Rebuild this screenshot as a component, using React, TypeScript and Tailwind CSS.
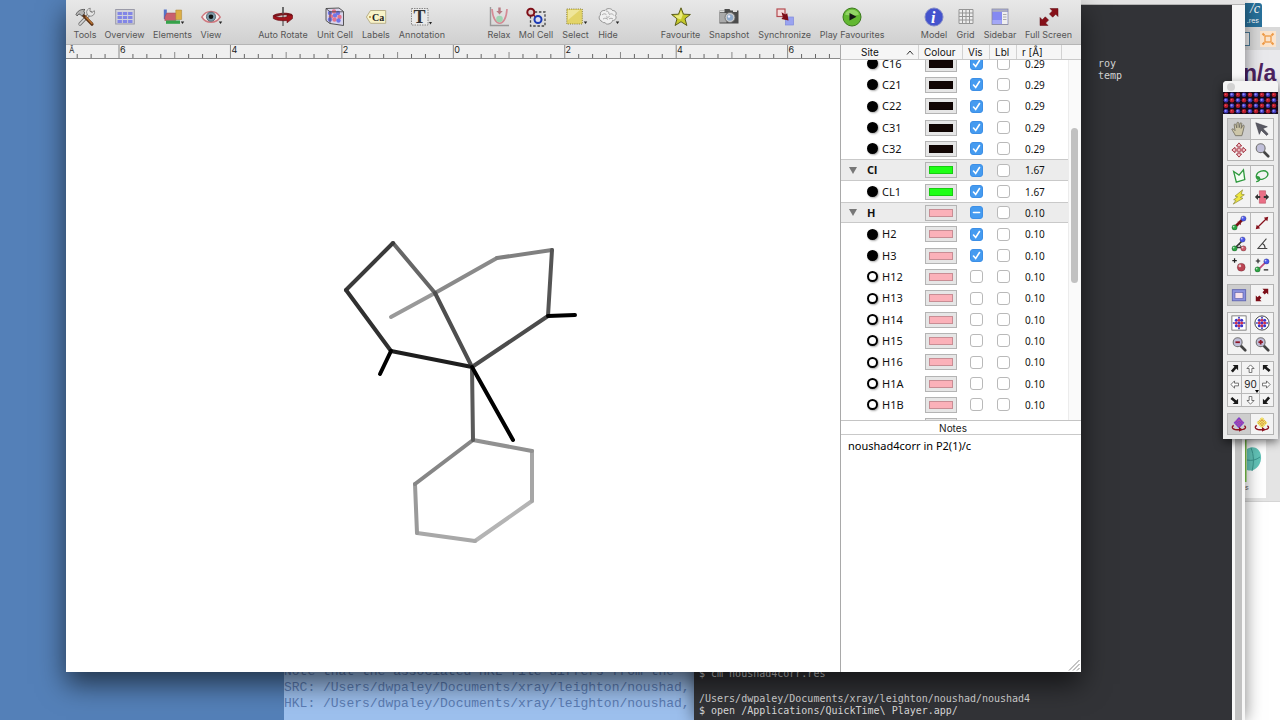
import { useLayoutEffect, useRef, useState } from "react";
import type { ReactNode } from "react";

const UI_FONT = "font-['Inter','Liberation_Sans',sans-serif]";
const LUCIDA_FONT = "font-['Noto_Sans','DejaVu_Sans',sans-serif]";
const MONO_FONT = "font-['DejaVu_Sans_Mono','Liberation_Mono',monospace]";

/* ---------- toolbar icons ---------- */

const DROP_ARROW = <path d="M17.8 14.5h3.4l-1.700 2.600z" fill="#222" />;

const ICONS: Record<string, ReactNode> = {
  tools: (
    <>
      <path d="M16 5.5 5 17" stroke="#777" strokeWidth="3.4" strokeLinecap="round" />
      <path d="M16 5.5 5 17" stroke="#d8d8d8" strokeWidth="1.8" strokeLinecap="round" />
      <path d="M19.3 3.6a4 4 0 1 1-4-2.4l-.4 3 2.2 1.3z" fill="#e4e4e4" stroke="#777" strokeWidth=".8" />
      <path d="m8 8 9 9.2" stroke="#5b3217" strokeWidth="3.2" strokeLinecap="round" />
      <path d="m11 10 6 6.4" stroke="#b87333" strokeWidth="1.5" strokeLinecap="round" />
      <path d="M1 7.5C2.5 4 5.500 2 10 2.500 8.500 3.500 8.500 4.500 9.800 6L6.800 9.200 5 7.200C3.600 7 2.500 7.500 2.300 9z" fill="#b5b5b5" stroke="#444" strokeWidth=".8" />
    </>
  ),
  overview: (
    <>
      <rect x=".7" y="2.500" width="18.600" height="14.500" fill="#d2d2da" stroke="#9a9aa8" />
      {[5, 9, 13].map((y) =>
        [2.5, 7.8, 13.1].map((x) => <rect key={`${x}-${y}`} x={x} y={y} width="4.400" height="3" fill="#8286e6" />),
      )}
    </>
  ),
  elements: (
    <>
      <path d="M.8 2.500h3v9.500h-3z" fill="#5572c8" />
      <path d="M3.800 6h9v7.500H1.800V10z" fill="#c9606e" stroke="#9d4553" strokeWidth=".5" />
      <path d="M12.800 3h5.800v9.500h-5.800z" fill="#dcae45" stroke="#a98331" strokeWidth=".5" />
      <path d="M3 13.500h14v3.300H3z" fill="#35a24a" />
      {DROP_ARROW}
    </>
  ),
  view: (
    <>
      <path d="M.8 10C5 2.500 15 2.500 19.200 10 15 17 5 17 .8 10z" fill="#f6eeee" stroke="#cf7a80" strokeWidth="1.500" />
      <circle cx="10" cy="9.700" r="4.600" fill="#7d99a8" stroke="#4a5c66" strokeWidth=".8" />
      <circle cx="10" cy="9.700" r="2.300" fill="#111" />
      {DROP_ARROW}
    </>
  ),
  autoRotate: (
    <>
      <path d="M10 0v19" stroke="#555" strokeWidth="1.200" />
      <path d="M.3 8.500C3 5.400 14 5 19 7l.5 2.500C14 7.500 5 8 1 11z" fill="#7a1a20" />
      <path d="M.3 8.500v3C4 13.800 9 14 14 13.500v2.300l5.500-4.200V8.200L14 7.800v2C9 10.800 4 10.500.3 8.500z" fill="#a3121b" stroke="#5e0a10" strokeWidth=".6" />
      <path d="M10 0v7" stroke="#555" strokeWidth="1.200" />
    </>
  ),
  unitCell: (
    <>
      <path d="M1 1.500 14 1l4.500 3.500v14L5 16.500 1 13.500z" fill="#d9d5ec" stroke="#444" strokeWidth=".9" />
      {[
        [5, 6, "#7276e6"], [9, 4.5, "#e5738c"], [13, 6, "#7276e6"], [6, 9.5, "#e5738c"], [10, 8.5, "#7276e6"],
        [14.5, 10, "#e5738c"], [5, 12.5, "#7276e6"], [9.5, 12.5, "#e5738c"], [13.5, 13.5, "#7276e6"],
      ].map(([x, y, c]) => <circle key={`${x}-${y}`} cx={x} cy={y} r="2.200" fill={c as string} />)}
      <path d="m1 1.500 4 3.300h13.500M5 4.800v11.700" fill="none" stroke="#444" strokeWidth=".8" />
    </>
  ),
  labels: (
    <>
      <path d="M4.500 3.500h15.200v12.800H4.500L.4 10z" fill="#f8f3c8" stroke="#b9b08a" />
      <circle cx="4" cy="10" r="1" fill="#b58b3a" />
      <text x="6" y="13.500" fontSize="10" fontWeight="700" fill="#222" className="font-['Liberation_Serif',serif]">Ca</text>
    </>
  ),
  annotation: (
    <>
      <rect x="-.5" y="1.500" width="16.500" height="16.500" fill="#e9e9e9" stroke="#888" strokeDasharray="1.500 1" />
      <text x="1.500" y="16" fontSize="18" fontWeight="700" fill="#333" className="font-['Liberation_Serif',serif]">T</text>
      <path d="M17 15h3l-1.500 2.500z" fill="#222" />
    </>
  ),
  relax: (
    <g opacity=".65">
      <path d="M1.500 0v18.500H20" fill="none" stroke="#777" strokeWidth="1.400" />
      <path d="M3 2c1.500 19 14 19 15 0" fill="none" stroke="#cf5d6c" strokeWidth="1.700" />
      <circle cx="10.500" cy="12" r="3.300" fill="#7ed09c" />
      <path d="M9.300.5h2.400V4h2l-3.200 3.500L7.300 4h2z" fill="#a24652" />
    </g>
  ),
  molCell: (
    <>
      <rect x="4.500" y="5" width="14.500" height="14" fill="none" stroke="#444" strokeWidth="1.300" strokeDasharray="2.500 1.700" />
      <circle cx="4.800" cy="5.300" r="3.500" fill="#dcc" stroke="#7f0e17" strokeWidth="2" />
      <path d="m7.500 8 1.700 1.700" stroke="#7f0e17" strokeWidth="1.500" />
      <circle cx="12" cy="12.500" r="3.500" fill="#dde" stroke="#1b3bb5" strokeWidth="2" />
    </>
  ),
  select: (
    <>
      <rect x=".8" y="2" width="15.500" height="15" fill="#e3d468" stroke="#8a8038" strokeDasharray="1 1.200" />
      <path d="M2 3h12L2 13z" fill="#efe69a" />
      {DROP_ARROW}
    </>
  ),
  hide: (
    <>
      <path d="M4 14.500C.5 13 .5 9 2.500 8 1.500 4.500 5 3 7 3.500 9 .5 14 1.500 14.500 3.500c3.500 0 4.500 3 3 5 1.500 3-.5 5-3 5C14 17 8 18.500 7 15.500c-1 .5-2.500 0-3-1z" fill="#f0f0f0" stroke="#888" strokeWidth=".9" />
      <path d="M4 8c2-2 4-1 4.500 0M8 4c2 0 3 1 3 3M11 8c2-2 4-1 5 .5M5 12c2-1.500 4-.5 5 .5M11 12c1-1 3-1 4 0M8 9.500c1 1 2 1 3.500 0" fill="none" stroke="#999" strokeWidth=".8" />
      {DROP_ARROW}
    </>
  ),
  favourite: (
    <>
      <path d="m10 .8 2.500 6.400 6.900.3-5.400 4.300 1.900 6.700L10 14.700l-5.900 3.800L6 11.800.6 7.500l6.900-.3z" fill="#c6c92a" stroke="#5c5e1d" strokeWidth="1" />
      <path d="m10 3.500 1.700 4.600-1.700 4.300-4-1.200-2.800-2.600 5-.4z" fill="#eaea7c" />
    </>
  ),
  snapshot: (
    <>
      <path d="M.5 3.500h5V2h5l1 1.500h8v13H.5z" fill="#4b4b4b" />
      <path d="M.5 3.500h5v1.800h-5zM14 3h4v2h-4z" fill="#ddd" />
      <path d="M.5 6h7v9.500h-7z" fill="#aaa" />
      <circle cx="11" cy="10.500" r="5" fill="#ccc" stroke="#666" strokeWidth=".8" />
      <circle cx="11" cy="10.500" r="3.200" fill="#8ea9c9" />
      <circle cx="10" cy="9.500" r="1.200" fill="#eef" />
    </>
  ),
  synchronize: (
    <>
      <rect x="2" y="2" width="8" height="7.500" fill="#f5dcdc" stroke="#b54b50" strokeWidth="1.200" />
      <rect x="10.500" y="10" width="8" height="8" fill="#9aa3f0" stroke="#7f89dd" strokeWidth=".7" />
      <path d="m7.500 6.500 2.700 1.700 1.600-1 1 5.500-5.300-1 1-1.500z" fill="#7c0d18" stroke="#7c0d18" strokeWidth="1.200" />
    </>
  ),
  play: (
    <>
      <circle cx="10" cy="10" r="9" fill="#63b832" stroke="#3b7a1c" strokeWidth="1" />
      <path d="M3 7.500a7.600 7.600 0 0 1 14 0c-4 1.500-10 1.500-14 0z" fill="#a6df7c" opacity=".7" />
      <path d="m7.500 6 7 3.700-7 3.700z" fill="#151515" />
    </>
  ),
  model: (
    <>
      <circle cx="10" cy="10" r="9" fill="#4453cd" stroke="#8088c8" strokeWidth="1" />
      <text x="7" y="15.500" fontSize="16" fontWeight="700" fontStyle="italic" fill="#fff" className="font-['Liberation_Serif',serif]">i</text>
    </>
  ),
  grid: <path d="M3 2.500h14v14H3zM6.500 2.500v14M10 2.500v14M13.500 2.500v14M3 6h14M3 9.500h14M3 13h14" fill="#eee" stroke="#959595" strokeWidth="1" />,
  sidebar: (
    <>
      <rect x="2" y="2" width="16" height="15.500" fill="#8489f2" stroke="#8a8a9a" strokeWidth=".8" />
      <path d="M2.400 2.400h15.200v2.400H2.400z" fill="#aeb0bd" />
      <path d="M12 5h5.600v12H12z" fill="#efefef" />
      <path d="M13 7.500h3.500M13 10h3.500M13 12.500h3.500" stroke="#999" strokeWidth=".8" />
      <path d="M2.500 13h9.200v4H2.500z" fill="#a3a7f6" />
    </>
  ),
  fullScreen: (
    <path d="M11 1.500h8v8l-2.300-2.300-3 3-3.300-3.300 3-3zM1 18.500v-8l2.300 2.300 3-3 3.300 3.300-3 3L9 18.500z" fill="#861019" stroke="#5e0a10" strokeWidth=".5" />
  ),
};

type ToolbarItem = { icon: string; label: string; width: string };

const TOOLBAR: { spacer: string; items: ToolbarItem[] }[] = [
  {
    spacer: "",
    items: [
      { icon: "tools", label: "Tools", width: "w-[22px]" },
      { icon: "overview", label: "Overview", width: "w-[39px]" },
      { icon: "elements", label: "Elements", width: "w-[39px]" },
      { icon: "view", label: "View", width: "w-5" },
    ],
  },
  {
    spacer: "grow-[6]",
    items: [
      { icon: "autoRotate", label: "Auto Rotate", width: "w-[50px]" },
      { icon: "unitCell", label: "Unit Cell", width: "w-9" },
      { icon: "labels", label: "Labels", width: "w-7" },
      { icon: "annotation", label: "Annotation", width: "w-[46px]" },
    ],
  },
  {
    spacer: "grow-[7]",
    items: [
      { icon: "relax", label: "Relax", width: "w-[22px]" },
      { icon: "molCell", label: "Mol Cell", width: "w-[34px]" },
      { icon: "select", label: "Select", width: "w-[27px]" },
      { icon: "hide", label: "Hide", width: "w-5" },
    ],
  },
  {
    spacer: "grow-[7]",
    items: [
      { icon: "favourite", label: "Favourite", width: "w-[39px]" },
      { icon: "snapshot", label: "Snapshot", width: "w-10" },
      { icon: "synchronize", label: "Synchronize", width: "w-[53px]" },
      { icon: "play", label: "Play Favourites", width: "w-16" },
    ],
  },
  {
    spacer: "grow-[6]",
    items: [
      { icon: "model", label: "Model", width: "w-[26px]" },
      { icon: "grid", label: "Grid", width: "w-[19px]" },
      { icon: "sidebar", label: "Sidebar", width: "w-8" },
      { icon: "fullScreen", label: "Full Screen", width: "w-[47px]" },
    ],
  },
];

function Toolbar() {
  return (
    <div className="flex h-[45px] shrink-0 border-b border-[#b5b5b5] bg-linear-to-b from-[#e8e8e8] to-[#d0d0d0] pr-[9px] pl-2">
      {TOOLBAR.map((group, i) => (
        <div key={i} className={`flex ${group.spacer}`}>
          <div className="grow" />
          <div className="flex gap-[9px]">
            {group.items.map((item) => (
              <button key={item.label} type="button" className={`flex flex-col items-center pt-[7px] ${item.width}`}>
                <svg viewBox="0 0 20 20" className="h-5 w-5 shrink-0 overflow-visible">{ICONS[item.icon]}</svg>
                <span className="mt-[2px] text-[9px] leading-3 whitespace-nowrap text-[#555]">{item.label}</span>
              </button>
            ))}
          </div>
        </div>
      ))}
    </div>
  );
}

/* ---------- model view ---------- */

const RULER_LABELS = ["6", "4", "2", "0", "2", "4", "6"];

function Ruler() {
  const ticks = Array.from({ length: 55 }, (_, i) => i - 3);
  return (
    <div className="h-[14px] shrink-0 border-b border-[#8a8a8a] bg-[#efefef]">
      <svg className="h-[13px] w-full overflow-visible">
        {ticks.map((n) => {
          const x = 53 + n * 13.93;
          const top = n % 8 === 0 ? 0 : n % 4 === 0 ? 7 : 9;
          return <line key={n} x1={x} x2={x} y1={top} y2="13" stroke={n % 4 === 0 ? "#888" : "#666"} />;
        })}
        <text x="3" y="8" fontSize="8" fill="#333">Å</text>
        {RULER_LABELS.map((label, i) => (
          <text key={i} x={54 + i * 111.4} y="8" fontSize="9" fill="#222">{label}</text>
        ))}
      </svg>
    </div>
  );
}

// [x1, y1, x2, y2, colour], far bonds first
const BONDS: [number, number, number, number, string][] = [
  [466, 442, 409, 482, "#b4b4b4"],
  [409, 482, 351, 474, "#a8a8a8"],
  [351, 474, 349, 425, "#9a9a9a"],
  [466, 392, 466, 442, "#a6a6a6"],
  [407, 381, 466, 392, "#919191"],
  [349, 425, 407, 381, "#868686"],
  [325, 258, 369, 234, "#999"],
  [369, 234, 431, 199, "#8a8a8a"],
  [431, 199, 486, 191, "#808080"],
  [486, 191, 482, 257, "#555"],
  [482, 257, 406, 308, "#4c4c4c"],
  [327, 184, 369, 234, "#666"],
  [369, 234, 406, 308, "#4f4f4f"],
  [327, 184, 280, 231, "#3a3a3a"],
  [280, 231, 325, 292, "#303030"],
  [325, 292, 406, 308, "#1e1e1e"],
  [406, 308, 407, 381, "#5a5a5a"],
  [482, 257, 509, 256, "#000"],
  [325, 292, 314, 315, "#000"],
  [406, 308, 447, 381, "#000"],
];

function ModelView() {
  return (
    <div className="min-h-0 flex-1 bg-white">
      <svg viewBox="0 0 774 613" className="h-full w-full">
        {BONDS.map(([x1, y1, x2, y2, stroke], i) => (
          <line key={i} x1={x1} y1={y1} x2={x2} y2={y2} stroke={stroke} strokeWidth="4" strokeLinecap="round" />
        ))}
      </svg>
    </div>
  );
}

/* ---------- site table ---------- */

type Vis = "on" | "off" | "mixed";
type Site = { name: string; group?: boolean; filled?: boolean; colour: string; vis: Vis; radius: string };

const BLACK = "bg-[#120604]";
const GREEN = "bg-[#1fff17]";
const PINK = "bg-[#fbb1b9]";

const atom = (name: string, colour: string, vis: Vis, radius: string): Site => ({
  name, colour, vis, radius, filled: vis === "on",
});

const SITES: Site[] = [
  ...["C16", "C21", "C22", "C31", "C32"].map((n) => atom(n, BLACK, "on", "0.29")),
  { name: "Cl", group: true, colour: GREEN, vis: "on", radius: "1.67" },
  atom("CL1", GREEN, "on", "1.67"),
  { name: "H", group: true, colour: PINK, vis: "mixed", radius: "0.10" },
  ...["H2", "H3"].map((n) => atom(n, PINK, "on", "0.10")),
  ...["H12", "H13", "H14", "H15", "H16", "H1A", "H1B", "H21"].map((n) => atom(n, PINK, "off", "0.10")),
];

function CheckBox({ label, initial }: { label: string; initial: Vis }) {
  const [value, setValue] = useState(initial);
  return (
    <span className="relative mx-auto block h-[13px] w-[13px]">
      <input
        type="checkbox"
        aria-label={label}
        checked={value !== "off"}
        onChange={(e) => setValue(e.target.checked ? "on" : "off")}
        className="block h-[13px] w-[13px] appearance-none rounded-[3px] border border-[#b9b9b9] bg-white checked:border-[#3d8fe6] checked:bg-[#459bf0]"
      />
      {value !== "off" ? (
        <svg viewBox="0 0 13 13" className="pointer-events-none absolute inset-0" fill="none" stroke="#fff" strokeWidth="1.600" strokeLinecap="round">
          <path d={value === "on" ? "m3.500 7 2.200 2.500L9.500 3.500" : "M3.500 6.500h6"} />
        </svg>
      ) : null}
    </span>
  );
}

function SiteRow({ site }: { site: Site }) {
  const cell = site.group ? "border-y border-[#c9c9c9] bg-[#ececec] p-0" : "p-0";
  return (
    <tr className="h-[21px] nth-[3n]:h-[22px]">
      <td className={cell}>
        {site.group ? (
          <div className="flex items-center pl-2 font-bold">
            <button type="button" aria-label={`Collapse ${site.name}`} className="mr-[10px]">
              <svg viewBox="0 0 8 7" className="h-[7px] w-2"><path d="M0 0h8L4 7z" fill="#777" /></svg>
            </button>
            {site.name}
          </div>
        ) : (
          <div className="flex items-center pl-[26px]">
            <span
              className={`mr-1 h-[11px] w-[11px] shrink-0 rounded-full border-2 border-black shadow-[1px_1px_2px_rgba(0,0,0,0.35)] ${site.filled ? "bg-black" : "bg-white"}`}
            />
            {site.name}
          </div>
        )}
      </td>
      <td className={cell}>
        <button type="button" aria-label={`${site.name} colour`} className="mx-auto block h-4 w-8 border border-[#b4b4b4] bg-[#e6e6e6] p-[3px]">
          <span className={`block h-full border border-black/20 ${site.colour}`} />
        </button>
      </td>
      <td className={cell}><CheckBox label={`${site.name} visible`} initial={site.vis} /></td>
      <td className={cell}><CheckBox label={`${site.name} label`} initial="off" /></td>
      <td className={`${cell} pl-2 text-[10px]`}>{site.radius}</td>
    </tr>
  );
}

function SiteTable() {
  const scroller = useRef<HTMLDivElement>(null);

  useLayoutEffect(() => {
    if (scroller.current) scroller.current.scrollTop = 7;
  }, []);

  const th = "h-[14px] border-b border-[#c9c9c9] bg-[#f6f6f6] p-0 text-left font-normal";
  const divider = "border-r border-[#d2d2d2]";
  return (
    <div className="relative h-[376px] shrink-0 border-b border-[#c4c4c4]">
      <div ref={scroller} className="h-full overflow-y-scroll [scrollbar-width:none]">
        <table className={`w-full table-fixed border-separate border-spacing-0 text-[11px] leading-[14px] text-[#111] ${LUCIDA_FONT}`}>
          <thead className={`sticky top-0 z-10 text-[10px] ${UI_FONT}`}>
            <tr>
              <th className={`${th} w-[78px]`}>
                <div className={`flex items-center justify-between pr-1 pl-5 ${divider}`}>
                  Site
                  <svg viewBox="0 0 8 5" className="h-[5px] w-2"><path d="m1 4.500 3-3.500 3 3.500" fill="none" stroke="#333" /></svg>
                </div>
              </th>
              <th className={`${th} w-11`}><div className={`pl-[5px] ${divider}`}>Colour</div></th>
              <th className={`${th} w-[27px]`}><div className={`pl-[5px] ${divider}`}>Vis</div></th>
              <th className={`${th} w-[27px]`}><div className={`pl-[5px] ${divider}`}>Lbl</div></th>
              <th className={th}><div className={`mr-[6px] pl-[5px] ${divider}`}>r [Å]</div></th>
              <th className={`${th} w-[13px]`} />
            </tr>
          </thead>
          <tbody>
            {SITES.map((site) => <SiteRow key={site.name} site={site} />)}
          </tbody>
        </table>
      </div>
      <div className="absolute top-[15px] right-0 bottom-0 w-[13px] border-l border-[#ececec] bg-[#fafafa]">
        <div className="mt-[68px] ml-[2px] h-[155px] w-[7px] rounded-full bg-[#c1c1c1]" />
      </div>
    </div>
  );
}

function Inspector() {
  return (
    <aside className="flex w-[241px] shrink-0 flex-col border-l border-[#a9a9a9] bg-white">
      <SiteTable />
      <label htmlFor="notes" className="block h-[14px] shrink-0 border-b border-[#c9c9c9] pr-4 text-center text-[10px] leading-[14px] text-[#222]">
        Notes
      </label>
      <div className="relative flex min-h-0 flex-1">
        <textarea
          id="notes"
          defaultValue="noushad4corr in P2(1)/c"
          className={`w-full resize-none px-[7px] py-1 text-[11px] leading-[14px] text-black outline-none ${LUCIDA_FONT}`}
        />
        <svg viewBox="0 0 12 12" className="absolute right-px bottom-px h-3 w-3">
          <path d="M1 11.500 11.500 1M5 11.500 11.500 5M9 11.500l2.500-2.500" stroke="#8a8a8a" />
        </svg>
      </div>
    </aside>
  );
}

/* ---------- tool palette ---------- */

const ball = (x: number, y: number, fill: string, r = 3) => (
  <>
    <circle cx={x} cy={y} r={r} fill={fill} stroke="#000" strokeOpacity=".35" strokeWidth=".6" />
    <circle cx={x - r / 3} cy={y - r / 3} r={r / 3} fill="#fff" opacity=".7" />
  </>
);

const LATTICE = (
  <>
    {[6, 9, 12].map((y) => [6, 9, 12].map((x) => (
      <circle key={`${x}-${y}`} cx={x} cy={y} r="1.700" fill={(x + y) % 2 ? "#d3304a" : "#3636cf"} />
    )))}
    <path d="M9 1.500 10.500 4h-3zM9 16.500 10.500 14h-3zM1.500 9 4 7.500v3zM16.500 9 14 7.500v3z" fill="#2929b5" />
  </>
);

const magnifier = (sign: string) => (
  <>
    <path d="m11 11 5 5" stroke="#444" strokeWidth="3" strokeLinecap="round" />
    <circle cx="7.500" cy="7" r="5" fill="#c0bfd9" stroke="#777" strokeWidth="1.300" />
    <path d={sign} stroke="#8e1626" strokeWidth="2" />
  </>
);

const spinLattice = (a: string, b: string) => (
  <>
    <path d="m9 1 6 6.500L9 14 3 7.500z" fill={a} />
    <path d="m4.500 6 6 6M6 4.500l6 6M7.500 3l6 6M13.500 6l-6 6M12 4.500l-6 6M10.500 3l-6 6" stroke={b} strokeWidth=".9" strokeDasharray="1.200 1" />
    <path d="M3 10.500c-3.500 2.500-1 5 6 5s9-2.500 6-4.500" fill="none" stroke="#8e1320" strokeWidth="1.500" />
    <path d="m9 12.500 4 2.800-4 2.500z" fill="#8e1320" />
  </>
);

const DARK_RED_ARROWS = "M9.500 2H16v6.500l-2-2-2 2L9.500 6l2-2zM2 16V9.500l2 2 2-2L8.500 12l-2 2 2 2z";

type Tool = { label: string; active?: boolean; art: ReactNode };

const PALETTE: { gap: string; tools: Tool[] }[] = [
  {
    gap: "mt-1",
    tools: [
      {
        label: "Pan",
        active: true,
        art: <path d="M5 16.500C3.500 13 1.500 11 1 9.200c1-.9 2 0 3.500 1.600L3.500 4c.9-1 1.800-.5 2.200.6l.8 3.200L6.700 2c.9-.9 2-.5 2.100.5L9.200 7.500l1.200-5.200c1-.7 1.900 0 1.700 1l-.7 5 2-3.500c1.200-.4 1.600.4 1.400 1.300-1 3.400-1.300 7-2.600 10.400z" fill="#cdc6a8" stroke="#6b675a" strokeWidth=".9" />,
      },
      { label: "Pointer", art: <path d="m2 2 13 4.500-5 2 6 6-1.800 1.800-6.200-6L6 15z" fill="#5a5a64" stroke="#3a3a44" strokeWidth=".6" /> },
      {
        label: "Move",
        art: <path d="M9 1 6 4.500h2V8H4.500V6L1 9l3.500 3v-2H8v3.500H6L9 17l3-3.500h-2V10h3.500v2L17 9l-3.500-3v2H10V4.500h2z" fill="#f4cdd2" stroke="#9e2836" strokeWidth="1" />,
      },
      { label: "Magnify", art: magnifier("") },
    ],
  },
  {
    gap: "mt-1",
    tools: [
      { label: "Polygon select", art: <path d="m3 4 6 4 5-6 1.500 11L6 16z" fill="#f4fff4" stroke="#2f9a3e" strokeWidth="1.500" /> },
      { label: "Lasso", art: <path d="M5 13c-4-2-3-8 3-9.500s9 2 7 5.500-8 5-10.500 2.500 1.500-2 2 .5-2 3-4 3.500" fill="none" stroke="#2f9a3e" strokeWidth="1.500" /> },
      { label: "Bolt", art: <path d="m13 1-8.500 7 3 .8L3 12l2.500.8L2.500 17l11-6.500-3-1L15 6.500l-3.500-.8z" fill="#eee73f" stroke="#8d8a35" strokeWidth=".8" /> },
      {
        label: "Split",
        art: (
          <>
            <path d="M6 2h7v14H6z" fill="#ea6f86" stroke="#b34758" strokeWidth=".6" />
            <path d="m1 9 3.500-3.500v2.300H7v2.400H4.500v2.300zM17 9l-3.500-3.500v2.300H11v2.400h2.500v2.300z" fill="#333" />
          </>
        ),
      },
    ],
  },
  {
    gap: "mt-1",
    tools: [
      { label: "Bond", art: <><path d="m5 13 8-8" stroke="#7d1018" strokeWidth="3" />{ball(4, 14, "#2ea344")}{ball(14, 4, "#4c58ea")}<path d="M7 7.500h4v4" fill="#7d1018" /></> },
      { label: "Distance", art: <path d="m2 16 1-5 1.500 1.500 8-8L11 3l5-1-1 5-1.500-1.500-8 8L7 15z" fill="#86111c" /> },
      { label: "Bond angle", art: <><path d="M13 5 5 13h8" fill="none" stroke="#333" strokeWidth="1.800" /><path d="M9 9c1.500 1 2 2.500 2 4" fill="none" stroke="#333" />{ball(13, 4, "#4c58ea")}{ball(4, 14, "#2ea344")}{ball(14, 14, "#cb5c69")}</> },
      { label: "Angle", art: <path d="m14 3-9.500 11H15M9.500 8.500c2 1 3 3 3 5.500" fill="none" stroke="#444" strokeWidth="1.200" /> },
      { label: "Add atom", art: <>{ball(11.5, 11.5, "#bb4453", 4.5)}<path d="M4 1.500v5M1.500 4h5" stroke="#222" strokeWidth="1.400" /></> },
      { label: "Add bond", art: <><path d="m5 14 8-8" stroke="#c04c7a" strokeWidth="2" />{ball(14, 5, "#4c58ea")}{ball(4, 14, "#2ea344")}<path d="M4.500 2v5M2 4.500h5M11 14.500h5" stroke="#222" strokeWidth="1.300" /></> },
    ],
  },
  {
    gap: "mt-2",
    tools: [
      { label: "Window", active: true, art: <><rect x="1.500" y="3" width="15" height="12.500" fill="#8c92df" stroke="#5f64b0" /><rect x="4.500" y="6" width="9" height="7" fill="#f9e3ec" stroke="#5257a5" strokeWidth=".7" /></> },
      { label: "Full screen", art: <path d={DARK_RED_ARROWS} fill="#7b0d17" /> },
    ],
  },
  {
    gap: "mt-[6px]",
    tools: [
      { label: "Fit cell", art: <><rect x="1" y="1" width="16" height="16" fill="#fff" stroke="#555" strokeWidth=".8" />{LATTICE}</> },
      { label: "Fit sphere", art: <><circle cx="9" cy="9" r="8" fill="#fff" stroke="#333" />{LATTICE}</> },
      { label: "Zoom out", art: magnifier("M5 7h5") },
      { label: "Zoom in", art: magnifier("M5 7h5M7.500 4.500v5") },
    ],
  },
];

const SPIN_TOOLS: Tool[] = [
  { label: "Spin lattice", active: true, art: spinLattice("#7a3fc8", "#e0558a") },
  { label: "Rock lattice", art: spinLattice("#f2e96b", "#c4622f") },
];

// solid arrow points to the top right, hollow arrow points up
const SOLID_ARROW = <path d="M3 1h6v6L7 5 3.200 9.500 1 7.500 5 3z" fill="#1a1a1a" />;
const HOLLOW_ARROW = <path d="m5 1 4 4H6.500v4.500h-3V5H1z" fill="#fff" stroke="#555" strokeWidth=".9" />;

const ROTATIONS = [
  { label: "Rotate up right", art: SOLID_ARROW, turn: "" },
  { label: "Rotate up", art: HOLLOW_ARROW, turn: "" },
  { label: "Rotate up left", art: SOLID_ARROW, turn: "-rotate-90" },
  { label: "Rotate left", art: HOLLOW_ARROW, turn: "-rotate-90" },
  null,
  { label: "Rotate right", art: HOLLOW_ARROW, turn: "rotate-90" },
  { label: "Rotate down right", art: SOLID_ARROW, turn: "rotate-90" },
  { label: "Rotate down", art: HOLLOW_ARROW, turn: "rotate-180" },
  { label: "Rotate down left", art: SOLID_ARROW, turn: "rotate-180" },
];

function ToolGroup({ gap, tools }: { gap: string; tools: Tool[] }) {
  return (
    <div className={`grid grid-cols-2 gap-px border border-[#b3b3b3] bg-[#b9b9b9] ${gap}`}>
      {tools.map((tool) => (
        <button
          key={tool.label}
          type="button"
          aria-label={tool.label}
          className={`flex h-5 items-center justify-center ${tool.active ? "bg-[#cdcdcd]" : "bg-[#f3f3f3]"}`}
        >
          <svg viewBox="0 0 18 18" className="h-4 w-4">{tool.art}</svg>
        </button>
      ))}
    </div>
  );
}

function Palette() {
  return (
    <section className="absolute top-[81px] right-[2px] w-[55px] overflow-hidden rounded-t-[4px] bg-[#ebebeb] pb-1 shadow-[0_3px_10px_rgba(0,0,0,0.55)]">
      <div className="flex h-[11px] items-center bg-[#f4f4f4] pl-1">
        <button type="button" aria-label="Close palette" className="h-2 w-2 rounded-full bg-[#d2d2d2]" />
      </div>
      <svg className="block h-[22px] w-full">
        <defs>
          <pattern id="atoms" width="12" height="11" patternUnits="userSpaceOnUse">
            <rect width="12" height="11" fill="#140818" />
            <circle cx="3" cy="2.700" r="2.300" fill="#b51c2a" />
            <circle cx="9" cy="2.700" r="2.300" fill="#3d37b4" />
            <circle cx="3" cy="8.200" r="2.300" fill="#3d37b4" />
            <circle cx="9" cy="8.200" r="2.300" fill="#b51c2a" />
            <circle cx="8.600" cy="2.300" r="1.100" fill="#8f8cff" />
            <circle cx="2.600" cy="7.800" r="1.100" fill="#8f8cff" />
            <circle cx="2.600" cy="2.300" r=".8" fill="#f2545c" />
            <circle cx="8.600" cy="7.800" r=".8" fill="#f2545c" />
          </pattern>
        </defs>
        <rect width="100%" height="22" fill="url(#atoms)" />
      </svg>
      <div className="px-1">
        {PALETTE.map((group) => <ToolGroup key={group.tools[0].label} {...group} />)}
        <div className="mt-[6px] grid grid-cols-[13px_17px_13px] grid-rows-[13px_17px_12px] gap-px border border-[#b3b3b3] bg-[#b9b9b9]">
          {ROTATIONS.map((r) => r ? (
            <button key={r.label} type="button" aria-label={r.label} className="flex items-center justify-center bg-[#f3f3f3]">
              <svg viewBox="0 0 10 10" className={`h-[9px] w-[9px] ${r.turn}`}>{r.art}</svg>
            </button>
          ) : (
            <button key="angle" type="button" className="relative bg-[#f3f3f3] text-center text-[10px] leading-[17px] text-[#222]">
              90
              <svg viewBox="0 0 4 3" className="absolute right-0 bottom-0 h-[3px] w-1"><path d="M0 0h4L2 3z" /></svg>
            </button>
          ))}
        </div>
        <ToolGroup gap="mt-[6px]" tools={SPIN_TOOLS} />
      </div>
    </section>
  );
}

/* ---------- background windows ---------- */

function ReportWindow() {
  return (
    <section className="absolute right-[586px] bottom-0 left-[284px] h-[60px] overflow-hidden bg-[#9dc0ee] font-['Liberation_Mono',monospace] text-[13px] leading-4 whitespace-pre text-[#5b7db5]">
      <p className="pt-1">Note that the associated HKL file differs from the</p>
      <p>SRC: /Users/dwpaley/Documents/xray/leighton/noushad,</p>
      <p>HKL: /Users/dwpaley/Documents/xray/leighton/noushad,</p>
    </section>
  );
}

function TerminalWindow() {
  return (
    <section className={`absolute inset-y-0 right-[35px] left-[694px] flex flex-col bg-[#323337] text-[10px] text-[#d6d6d6] shadow-[0_0_16px_rgba(0,0,0,0.5)] ${MONO_FONT}`}>
      <div className="h-[5px] shrink-0 border-b border-[#b5b5b5] bg-[#e3e3e3]" />
      <div className="flex min-h-0 flex-1">
        <div className="flex flex-1 flex-col justify-between pl-[5px] leading-[12px]">
          <div className="pt-[53px] pl-[399px]">
            <p>roy</p>
            <p>temp</p>
          </div>
          <div className="pb-[3px] whitespace-pre">
            <p>$ cm noushad4corr.res</p>
            <p className="mt-[13px]">/Users/dwpaley/Documents/xray/leighton/noushad/noushad4</p>
            <p>$ open /Applications/QuickTime\ Player.app/</p>
          </div>
        </div>
        <div className="flex w-[13px] flex-col justify-end bg-[#f7f7f7] px-[3px]">
          <div className="h-[500px] rounded-t-full bg-[#c1c1c1]" />
        </div>
      </div>
    </section>
  );
}

function StructureWindow() {
  return (
    <section className="absolute inset-y-0 right-0 w-[35px] overflow-hidden bg-white">
      <div className="h-[27px] pt-[3px]">
        <div className="h-6 w-[17px] rounded-tr-[3px] bg-[#28719b] text-right leading-3 text-white">
          <p className="pr-[2px] font-['Liberation_Serif',serif] text-[14px] italic">/c</p>
          <p className="pr-[3px] text-[7px] leading-[11px]">.res</p>
        </div>
      </div>
      <div className="flex h-[23px] items-center gap-[10px] bg-[#d9d9d9]">
        <span className="h-[14px] w-[5px] border border-l-0 border-[#4c7a96] bg-[#eee]" />
        <svg viewBox="0 0 16 16" className="h-4 w-4">
          <rect width="16" height="16" fill="#fbe4cc" />
          <rect x="5" y="5" width="6" height="6" fill="none" stroke="#ee9a45" strokeWidth="1.300" />
          <path d="m2.500 2.500 2 2M13.500 2.500l-2 2M2.500 13.500l2-2M13.500 13.500l-2-2" stroke="#ee9a45" strokeWidth="2" />
        </svg>
      </div>
      <p className="-ml-[2px] h-[390px] bg-[#e9e9ec] pt-[9px] font-['Liberation_Sans',sans-serif] text-[23px] leading-7 font-bold text-[#4c2260]">n/a</p>
      <div className="flex h-[62px] border-b border-[#d5d5d5] bg-[#e4e4e4]">
        <svg viewBox="0 0 21 58" className="h-[58px] w-[21px] bg-white">
          <path d="M.5 0v42" stroke="#7fce4a" strokeWidth="2" />
          <path d="M2 9c6-4 13-1 14 7S10 33 2 30z" fill="#62c4b8" />
          <path d="M2 20c5 1 9 0 13-3M6 8c3 7 3 15 1 23" fill="none" stroke="#3c968e" />
          <text x="0" y="50" fontSize="7" fill="#555">s</text>
        </svg>
      </div>
    </section>
  );
}

export default function App() {
  return (
    <div className={`relative h-screen overflow-hidden bg-[#5480b8] ${UI_FONT}`}>
      <ReportWindow />
      <StructureWindow />
      <TerminalWindow />
      <main className="absolute top-0 right-[199px] bottom-12 left-[66px] flex flex-col bg-white shadow-[0_12px_26px_rgba(0,0,0,0.6)]">
        <Toolbar />
        <div className="flex min-h-0 flex-1">
          <div className="flex min-w-0 flex-1 flex-col">
            <Ruler />
            <ModelView />
          </div>
          <Inspector />
        </div>
      </main>
      <Palette />
    </div>
  );
}
